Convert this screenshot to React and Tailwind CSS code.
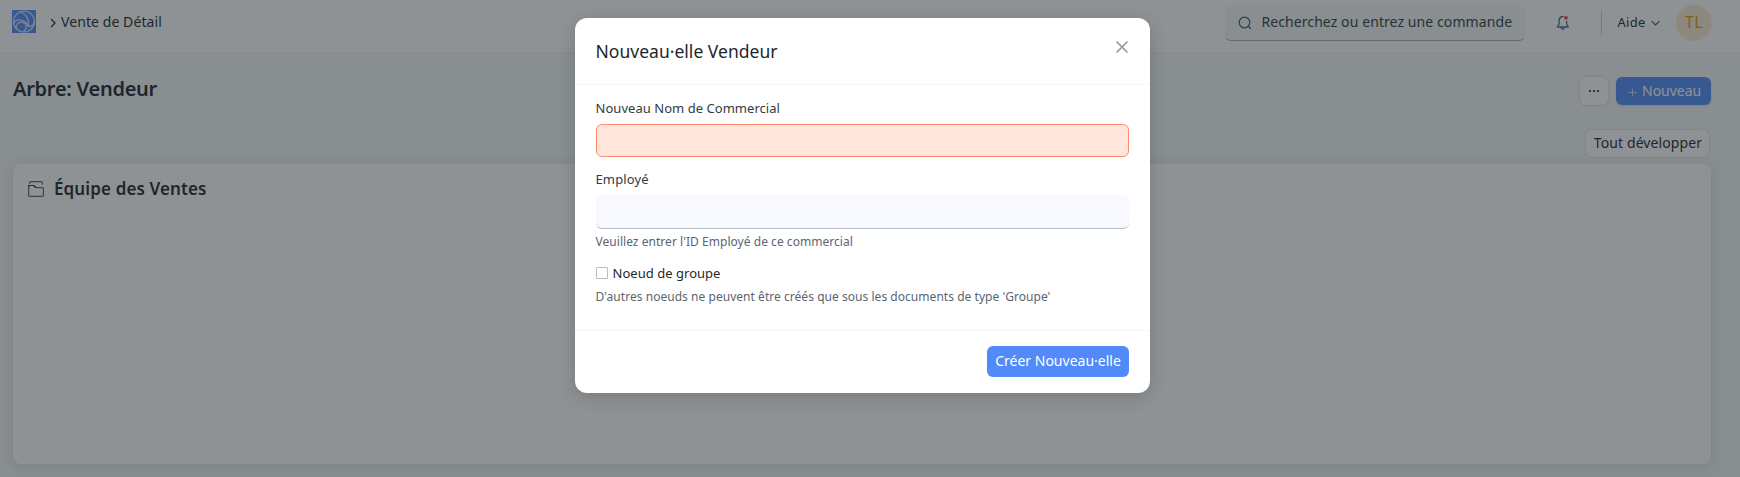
const font = "font-['Noto_Sans','Open_Sans',sans-serif]";

function Logo() {
  return (
    <svg className="h-[23px] w-6" viewBox="0 0 24 23" fill="none" stroke="#fff" strokeOpacity="0.8" strokeWidth="1.2">
      <rect width="24" height="23" fill="#528bf9" stroke="none" />
      <circle cx="12" cy="11.5" r="10.500" />
      <path d="M8 2C13.500 3.500 17 8.500 16.500 16.500C19.500 16.500 21.500 15 22.300 12.500" />
      <path d="M1.800 13C4 8.500 13.500 8.500 16.500 16.500" />
      <path d="M4.300 18.500C3.500 14.800 6 12.200 9.300 12.200C13 12.200 15 15.200 14 18C13.500 19.500 12.500 20.800 11.500 22" />
    </svg>
  );
}

function SearchIcon() {
  return (
    <svg className="size-3.5" viewBox="0 0 14 14" fill="none" stroke="#4c5a67" strokeWidth="1.3" strokeLinecap="round">
      <circle cx="6.500" cy="6.500" r="5.300" />
      <path d="M10.400 10.400L12.500 12.500" />
    </svg>
  );
}

function BellIcon() {
  return (
    <svg className="h-4 w-3.5" viewBox="0 0 14 16" fill="none" stroke="#4c6a88" strokeWidth="1.3" strokeLinecap="round" strokeLinejoin="round">
      <path d="M7.200 1.500C4.700 1.500 3.100 3.400 3.100 5.800V9L1.300 12H12.200L10.600 9V6.500" />
      <path d="M5.100 12.400C5.300 14.700 8.300 14.700 8.500 12.400" />
      <circle cx="10" cy="2.800" r="1.900" fill="#ff4040" stroke="none" />
    </svg>
  );
}

function FolderIcon() {
  return (
    <svg className="size-4" viewBox="0 0 16 16" fill="none" stroke="#4c6a88" strokeWidth="1.2" strokeLinejoin="round" strokeLinecap="round">
      <path d="M1.600 2.600V2C1.600 1.100 2 .7 3 .7H13C14 .7 14.400 1.100 14.400 2V3.200" />
      <path d="M.6 5.500C.6 4.800.9 4.500 1.500 4.500H5.300C5.800 4.500 6 4.600 6.300 5L7.500 6.200C7.800 6.500 8 6.600 8.500 6.600H14.500C15.200 6.600 15.400 6.900 15.400 7.500V14C15.400 15 15 15.400 14 15.400H2C1 15.400.6 15 .6 14Z" />
      <path d="M.6 6V4.500H5.500L7.500 6.300" stroke="#1f3850" />
    </svg>
  );
}

function Header() {
  return (
    <header className="flex h-[53px] items-start border-b border-[#ebeef6] bg-white pl-3">
      <div className="mt-2.5"><Logo /></div>
      <svg className="ml-[14px] mt-[18px] h-[10px] w-[7px]" viewBox="0 0 7 10" fill="none" stroke="#1f272e" strokeWidth="1.3" strokeLinecap="round" strokeLinejoin="round">
        <path d="M1.500 1.500L5 5L1.500 8.500" />
      </svg>
      <span className="ml-1 mt-3 text-[14px] leading-5 tracking-[0.08px] text-[#1f272e]">Vente de Détail</span>
      <div className="ml-auto mt-[5px] flex h-9 w-[300px] shrink-0 items-center rounded-md border-b border-[#a6b1b9] bg-[#f4f6f8] pl-[13px]">
        <SearchIcon />
        <span className="ml-[9px] -translate-y-px whitespace-nowrap text-[14px] leading-5 tracking-[0.09px] text-[#333c44]">Recherchez ou entrez une commande</span>
      </div>
      <div className="ml-[31px] mt-[15px]"><BellIcon /></div>
      <div className="ml-[31px] mt-[11px] h-6 w-px bg-[#c8cfd5]" />
      <span className="ml-[15px] mt-3 w-[28px] text-[13px] leading-5 tracking-[0.3px] text-[#1f272e]">Aide</span>
      <svg className="ml-[5.600px] mt-[20px] h-[7px] w-[9px]" viewBox="0 0 9 7" fill="none" stroke="#4c6a88" strokeWidth="1.300" strokeLinecap="round" strokeLinejoin="round">
        <path d="M1 1.500L4.500 5L8 1.500" />
      </svg>
      <div className="ml-4 mr-7 mt-[5px] flex size-9 items-center justify-center rounded-full bg-[#fcebd0] pb-0.5 text-[16px] tracking-[0.3px] text-[#e79913]">TL</div>
    </header>
  );
}

function Page() {
  return (
    <main className="flex flex-1 flex-col bg-[#f4f6f8] pl-[13px] pr-[29px]">
      <div className="flex h-[77px] items-start justify-between pt-6">
        <h1 className="mt-[-3px] text-[20px] font-semibold leading-[30px] tracking-[-0.26px] text-[#1f272e]">Arbre: Vendeur</h1>
        <div className="flex gap-2">
          <button className="flex h-7 w-7 items-center justify-center gap-[2px] rounded-md bg-white shadow-[0_0_3px_rgba(0,0,0,0.18)]">
            <i className="size-0.5 bg-[#2f4c69]" />
            <i className="size-0.5 bg-[#2f4c69]" />
            <i className="size-0.5 bg-[#2f4c69]" />
          </button>
          <button className="flex h-7 w-[95px] items-center rounded-md bg-[#528bf9] pb-px pl-3 text-[14px] text-white shadow-[0_1px_2px_rgba(0,0,0,0.1)]">
            <svg className="mt-[3px] size-[9px]" viewBox="0 0 9 9" stroke="#c8dafd" strokeWidth="1"><path d="M4.500 .5V8.500M.5 4.500H8.500" /></svg>
            <span className="ml-[5px]">Nouveau</span>
          </button>
        </div>
      </div>
      <div className="flex h-[34px] justify-end pr-0.5">
        <button className="h-[27px] w-[123px] rounded-md bg-white pb-px pl-px text-[14px] leading-[26px] tracking-[0.1px] text-[#1f272e] shadow-[0_0_3px_rgba(0,0,0,0.18)]">Tout développer</button>
      </div>
      <section className="h-[300px] rounded-lg bg-white px-[15px] pt-3 shadow-[0_2px_14px_rgba(25,39,52,0.14)]">
        <div className="flex items-start">
          <div className="mt-[5px]"><FolderIcon /></div>
          <h2 className="ml-[10px] mt-px text-[17px] font-semibold leading-6 tracking-[0.12px] text-[#1f272e]">Équipe des Ventes</h2>
        </div>
      </section>
    </main>
  );
}

function Dialog() {
  return (
    <div role="dialog" className="flex h-[375px] w-[575px] flex-col rounded-xl bg-white text-[#1f272e] shadow-[0_4px_18px_rgba(0,0,0,0.16)]">
      <div className="flex h-[67px] items-start justify-between border-b border-[#f4f5fd] pl-[20.5px] pr-[22px]">
        <h3 className="mt-[21px] text-[17.5px] leading-6 tracking-[0.02px]">Nouveau·elle Vendeur</h3>
        <svg className="mt-[23px] size-3" viewBox="0 0 12 12" stroke="#8d99a6" strokeWidth="1.700" strokeLinecap="round"><path d="M1 1L11 11M11 1L1 11" /></svg>
      </div>
      <div className="flex flex-1 flex-col px-[21px] pt-[13px]">
        <label className="-ml-[0.5px] text-[13px] leading-5 tracking-[0.04px] text-[#313b44]">Nouveau Nom de Commercial</label>
        <div className="mt-1.5 h-[33px] rounded-md border border-[#ff8b6b] bg-[#ffe6dd]" />
        <label className="-ml-[0.5px] mt-3 text-[13px] leading-5 tracking-[0.14px] text-[#313b44]">Employé</label>
        <div className="mt-1.5 h-[34px] rounded-md border-b border-[#b4bfc9] bg-[#f7f9ff]" />
        <p className="-ml-[0.5px] mt-1 text-[12px] leading-[18px] tracking-[0.04px] text-[#5a656f]">Veuillez entrer l'ID Employé de ce commercial</p>
        <div className="mt-[12px] flex items-center">
          <span className="size-3 rounded-[1px] border border-[#b4bfc9] bg-white" />
          <span className="ml-[4.5px] text-[13px] leading-5 tracking-[0.03px] text-[#1f272e]">Noeud de groupe</span>
        </div>
        <p className="-ml-[0.5px] mt-[5px] text-[12px] leading-[18px] tracking-[0.04px] text-[#5a656f]">D'autres noeuds ne peuvent être créés que sous les documents de type 'Groupe'</p>
      </div>
      <div className="flex h-[63px] items-start justify-end border-t border-[#f4f5fd] pr-[21px] pt-[15px]">
        <button className="h-[31px] w-[142px] rounded-md bg-[#528bf9] pb-px text-[14px] leading-[30px] text-white">Créer Nouveau·elle</button>
      </div>
    </div>
  );
}

export default function App() {
  return (
    <div className={font + " relative flex h-[477px] w-[1740px] flex-col overflow-hidden"}>
      <Header />
      <Page />
      <div className="absolute inset-0 flex items-start bg-[rgba(29,37,42,0.5)] pl-[575px] pt-[18px]">
        <Dialog />
      </div>
    </div>
  );
}
